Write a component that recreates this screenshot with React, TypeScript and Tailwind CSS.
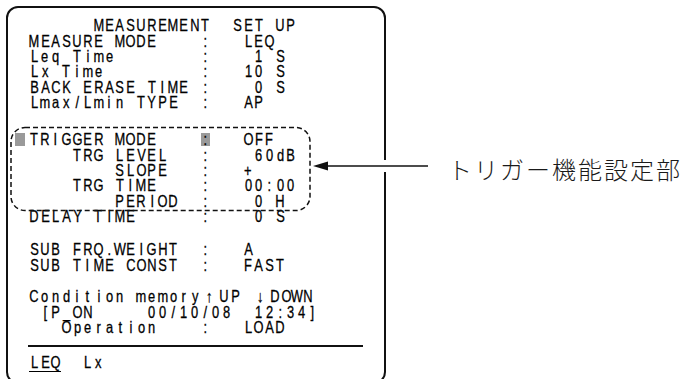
const WIDE = new Set(["↑", "↓"]);

interface RowProps {
  text: string;
  hl?: number;
  cursor?: boolean;
  className?: string;
}

function Row({ text, hl, cursor, className = "" }: RowProps) {
  return (
    <div className={`relative flex h-[15.4px] items-center ${className}`}>
      {cursor && (
        <span className="absolute left-[-14px] top-[1px] h-[13px] w-[10px] bg-[#9a9a9a]" />
      )}
      {Array.from(text).map((ch, i) =>
        WIDE.has(ch) ? (
          <span key={i} className="flex h-[13px] w-[19px] shrink-0 items-center justify-center">
            <span className="inline-block scale-x-[0.8]">{ch}</span>
          </span>
        ) : (
          <span key={i} className="flex h-[13px] w-[10.7px] shrink-0 items-center justify-center">
            <span
              className={`flex h-[13px] items-center justify-center ${
                i === hl ? "w-[9px] bg-[#9a9a9a]" : ""
              }`}
            >
              {ch !== " " && <span className="inline-block scale-x-[0.78]">{ch}</span>}
            </span>
          </span>
        )
      )}
    </div>
  );
}

const setup = [
  "      MEASUREMENT  SET UP",
  "MEASURE MODE    :   LEQ",
  "Leq Time        :    1 S",
  "Lx Time         :   10 S",
  "BACK ERASE TIME :    0 S",
  "Lmax/Lmin TYPE  :   AP",
];

const trigger = [
  "    TRG LEVEL   :    60dB",
  "        SLOPE   :   +",
  "    TRG TIME    :   00:00",
  "        PERIOD  :    0 H",
  "DELAY TIME      :    0 S",
];

export default function App() {
  return (
    <div className="relative flex h-[379px] w-[682px] items-start overflow-hidden bg-white pl-[6px] pt-[6px]">
      <div className="h-[378px] w-[380px] shrink-0 rounded-[12px] border-2 border-[#111] pl-[21px] pt-[10px] font-['Liberation_Sans',sans-serif] text-[16.5px] leading-[13px] text-black [-webkit-text-stroke:0.3px_#000]">
        {setup.map((t) => (
          <Row key={t} text={t} />
        ))}
        <div className="mt-[21.6px]">
          <Row text="TRIGGER MODE    :   OFF" hl={16} cursor />
          {trigger.map((t) => (
            <Row key={t} text={t} />
          ))}
        </div>
        <div className="mt-[18px]">
          <Row text="SUB FRQ.WEIGHT  :   A" />
          <Row text="SUB TIME CONST  :   FAST" />
        </div>
        <div className="mt-[16px]">
          <Row text="Condition memory↑UP ↓DOWN" />
          <Row text=" [P_ON     00/10/08  12:34]" />
          <Row text="   Operation    :   LOAD" />
        </div>
        <div className="ml-[-1px] mt-[10px] h-[2px] w-[335px] bg-[#111]" />
        <div className="mt-[8px] flex">
          <div className="border-b-[1.5px] border-black">
            <Row text="LEQ" />
          </div>
          <Row text="  Lx" />
        </div>
      </div>

      <div className="ml-[62px] mt-[151px] whitespace-nowrap font-['Noto_Sans_CJK_JP',sans-serif] text-[24px] font-light leading-none tracking-[2px] text-[#1a1a1a]">
        トリガー機能設定部
      </div>

      <svg
        className="pointer-events-none absolute left-0 top-0"
        width={682}
        height={379}
        viewBox="0 0 682 379"
      >
        <rect
          x={11}
          y={127.5}
          width={299}
          height={83}
          rx={14}
          fill="none"
          stroke="#111"
          strokeWidth={1.5}
          strokeDasharray="5 3"
        />
        <rect x={381} y={160} width={7} height={12} fill="#fff" />
        <line x1={326} y1={166} x2={428} y2={166} stroke="#111" strokeWidth={1.6} />
        <polygon points="313,166 328,161.5 328,170.5" fill="#111" />
      </svg>
    </div>
  );
}
